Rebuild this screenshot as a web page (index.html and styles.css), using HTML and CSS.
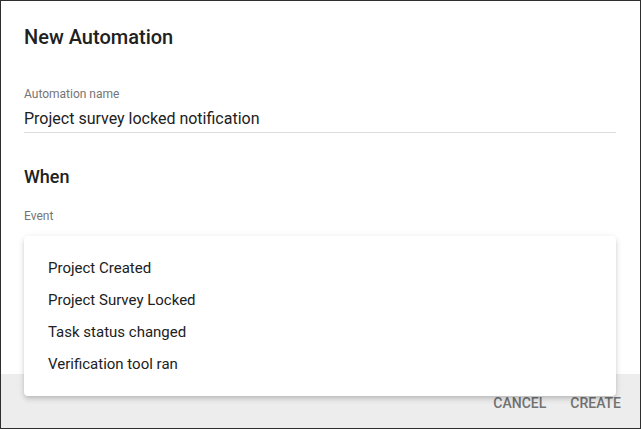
FILE: index.html
```html
<!DOCTYPE html>
<html>
<head>
<meta charset="utf-8">
<link rel="stylesheet" href="styles.css">
</head>
<body>
<div class="frame">
  <div class="dialog-body">
    <h1 class="title">New Automation</h1>
    <div class="field">
      <div class="field-label">Automation name</div>
      <div class="field-input">Project survey locked notification</div>
    </div>
    <h2 class="section-title">When</h2>
    <div class="field">
      <div class="field-label">Event</div>
    </div>
  </div>
  <div class="dialog-actions">
    <button class="action-btn">Cancel</button>
    <button class="action-btn">Create</button>
  </div>
  <ul class="menu">
    <li class="menu-item">Project Created</li>
    <li class="menu-item">Project Survey Locked</li>
    <li class="menu-item">Task status changed</li>
    <li class="menu-item">Verification tool ran</li>
  </ul>
</div>
</body>
</html>
```
FILE: styles.css
```css
html, body {
  margin: 0;
  padding: 0;
  background: #ffffff;
}
body {
  font-family: Roboto, "Liberation Sans", Arial, sans-serif;
  color: #212121;
}
.frame {
  position: relative;
  width: 641px;
  height: 429px;
  box-sizing: border-box;
  border: 1px solid #2e2e2e;
  background: #ffffff;
  display: flex;
  flex-direction: column;
  overflow: hidden;
}
.dialog-body {
  flex: 1;
  padding: 24px 24px 0 23px;
}
.title {
  margin: 0;
  font-size: 20px;
  line-height: 24px;
  font-weight: 500;
  color: #212121;
}
.field {
  display: flex;
  flex-direction: column;
}
.title + .field {
  margin-top: 37px;
}
.field-label {
  font-size: 12px;
  line-height: 16px;
  color: #757575;
}
.field-input {
  margin-top: 5px;
  font-size: 16px;
  line-height: 24px;
  padding-bottom: 1px;
  border-bottom: 1px solid #dddddd;
  color: #212121;
}
.section-title {
  margin: 32px 0 0 0;
  font-size: 18px;
  line-height: 24px;
  font-weight: 500;
  color: #212121;
}
.section-title + .field {
  margin-top: 19px;
}
.dialog-actions {
  height: 54px;
  box-sizing: border-box;
  background: #ededed;
  display: flex;
  justify-content: flex-end;
  align-items: flex-start;
  gap: 24px;
  padding: 21px 19px 0 0;
}
.action-btn {
  border: none;
  background: transparent;
  padding: 0;
  margin: 0;
  font-family: Roboto, "Liberation Sans", Arial, sans-serif;
  font-size: 14px;
  line-height: 16px;
  font-weight: 500;
  text-transform: uppercase;
  color: #737373;
}
.menu {
  position: absolute;
  top: 235px;
  left: 23px;
  width: 592px;
  height: 160px;
  box-sizing: border-box;
  margin: 0;
  padding: 16px 0;
  list-style: none;
  background: #ffffff;
  border-radius: 4px;
  box-shadow: 0 2px 4px -1px rgba(0,0,0,0.12), 0 4px 5px 0 rgba(0,0,0,0.08), 0 1px 8px 0 rgba(0,0,0,0.08);
}
.menu-item {
  height: 32px;
  line-height: 32px;
  padding-left: 24px;
  font-size: 15px;
  color: #212121;
}
```
